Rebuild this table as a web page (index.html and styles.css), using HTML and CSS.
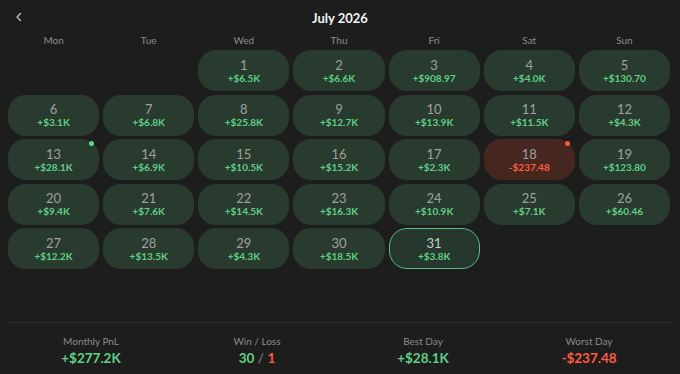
FILE: index.html
```html
<!DOCTYPE html>
<html>
<head>
<meta charset="utf-8">
<link rel="stylesheet" href="styles.css">
</head>
<body>
<div class="app">
  <header class="head">
    <button class="back" aria-label="Back">
      <svg width="10" height="10" viewBox="0 0 10 10"><path d="M6.5 1.5 L3 5 L6.5 8.5" fill="none" stroke="#bdbdbd" stroke-width="1.4" stroke-linecap="round" stroke-linejoin="round"/></svg>
    </button>
    <h1 class="title">July 2026</h1>
  </header>
  <div class="grid">
    <div class="dow">Mon</div><div class="dow">Tue</div><div class="dow">Wed</div><div class="dow">Thu</div><div class="dow">Fri</div><div class="dow">Sat</div><div class="dow">Sun</div>
    <div class="blank"></div><div class="blank"></div>
    <div class="day"><span class="n">1</span><span class="v">+$6.5K</span></div>
    <div class="day"><span class="n">2</span><span class="v">+$6.6K</span></div>
    <div class="day"><span class="n">3</span><span class="v">+$908.97</span></div>
    <div class="day"><span class="n">4</span><span class="v">+$4.0K</span></div>
    <div class="day"><span class="n">5</span><span class="v">+$130.70</span></div>
    <div class="day"><span class="n">6</span><span class="v">+$3.1K</span></div>
    <div class="day"><span class="n">7</span><span class="v">+$6.8K</span></div>
    <div class="day"><span class="n">8</span><span class="v">+$25.8K</span></div>
    <div class="day"><span class="n">9</span><span class="v">+$12.7K</span></div>
    <div class="day"><span class="n">10</span><span class="v">+$13.9K</span></div>
    <div class="day"><span class="n">11</span><span class="v">+$11.5K</span></div>
    <div class="day"><span class="n">12</span><span class="v">+$4.3K</span></div>
    <div class="day"><span class="n">13</span><span class="v">+$28.1K</span><i class="dot dot-g"></i></div>
    <div class="day"><span class="n">14</span><span class="v">+$6.9K</span></div>
    <div class="day"><span class="n">15</span><span class="v">+$10.5K</span></div>
    <div class="day"><span class="n">16</span><span class="v">+$15.2K</span></div>
    <div class="day"><span class="n">17</span><span class="v">+$2.3K</span></div>
    <div class="day loss"><span class="n">18</span><span class="v">-$237.48</span><i class="dot dot-r"></i></div>
    <div class="day"><span class="n">19</span><span class="v">+$123.80</span></div>
    <div class="day"><span class="n">20</span><span class="v">+$9.4K</span></div>
    <div class="day"><span class="n">21</span><span class="v">+$7.6K</span></div>
    <div class="day"><span class="n">22</span><span class="v">+$14.5K</span></div>
    <div class="day"><span class="n">23</span><span class="v">+$16.3K</span></div>
    <div class="day"><span class="n">24</span><span class="v">+$10.9K</span></div>
    <div class="day"><span class="n">25</span><span class="v">+$7.1K</span></div>
    <div class="day"><span class="n">26</span><span class="v">+$60.46</span></div>
    <div class="day"><span class="n">27</span><span class="v">+$12.2K</span></div>
    <div class="day"><span class="n">28</span><span class="v">+$13.5K</span></div>
    <div class="day"><span class="n">29</span><span class="v">+$4.3K</span></div>
    <div class="day"><span class="n">30</span><span class="v">+$18.5K</span></div>
    <div class="day today"><span class="n">31</span><span class="v">+$3.8K</span></div>
  </div>
  <footer class="stats">
    <div class="stat"><div class="lbl">Monthly PnL</div><div class="val g">+$277.2K</div></div>
    <div class="stat"><div class="lbl">Win / Loss</div><div class="val"><span class="g">30</span><span class="sep"> / </span><span class="r">1</span></div></div>
    <div class="stat"><div class="lbl">Best Day</div><div class="val g">+$28.1K</div></div>
    <div class="stat"><div class="lbl">Worst Day</div><div class="val r">-$237.48</div></div>
  </footer>
</div>
</body>
</html>
```
FILE: styles.css
```css
* { box-sizing: border-box; }
html, body { margin: 0; padding: 0; background: #1d1d1d; }
body { font-family: "Lato", "Inter", sans-serif; color: #e8e8e8; width: 680px; height: 374px; overflow: hidden; }
.app { padding: 0 8px; }
.head { position: relative; height: 33px; display: flex; align-items: center; justify-content: center; }
.back { position: absolute; left: 6px; top: 11px; background: none; border: 0; padding: 0; width: 10px; height: 12px; display: flex; align-items: center; cursor: pointer; }
.title { margin: 0; font-size: 13px; font-weight: 700; color: #f2f2f2; padding-top: 2px; }
.grid { display: grid; grid-template-columns: repeat(7, 1fr); column-gap: 4px; row-gap: 3.5px; width: 662px; }
.dow { text-align: center; font-size: 10px; color: #8c8c8c; height: 13.5px; line-height: 15px; }
.day { position: relative; height: 41px; border-radius: 18px; background: #293a2f; display: flex; flex-direction: column; align-items: center; justify-content: center; }
.n { font-size: 13px; color: #a0a0a0; line-height: 14px; }
.v { font-size: 10px; font-weight: 700; color: #5fcf86; line-height: 12px; }
.loss { background: #452720; }
.loss .v { color: #ff5b3d; }
.today { background: #26382d; border: 1.2px solid #5cbf7f; }
.today .n { color: #b9d9c4; }
.dot { position: absolute; top: 2px; right: 5px; width: 5px; height: 5px; border-radius: 50%; }
.dot-g { background: #5fd88c; }
.dot-r { background: #ff5b3d; }
.stats { margin-top: 53px; border-top: 1px solid #2e2e2e; display: grid; grid-template-columns: repeat(4, 1fr); padding-top: 11px; width: 664px; }
.stat { text-align: center; }
.lbl { font-size: 10px; color: #8a8a8a; line-height: 14px; }
.val { font-size: 13.5px; font-weight: 700; line-height: 18px; margin-top: 1px; }
.g { color: #5fcf86; }
.r { color: #ff5b3d; }
.sep { color: #8a8a8a; font-weight: 400; }
```
